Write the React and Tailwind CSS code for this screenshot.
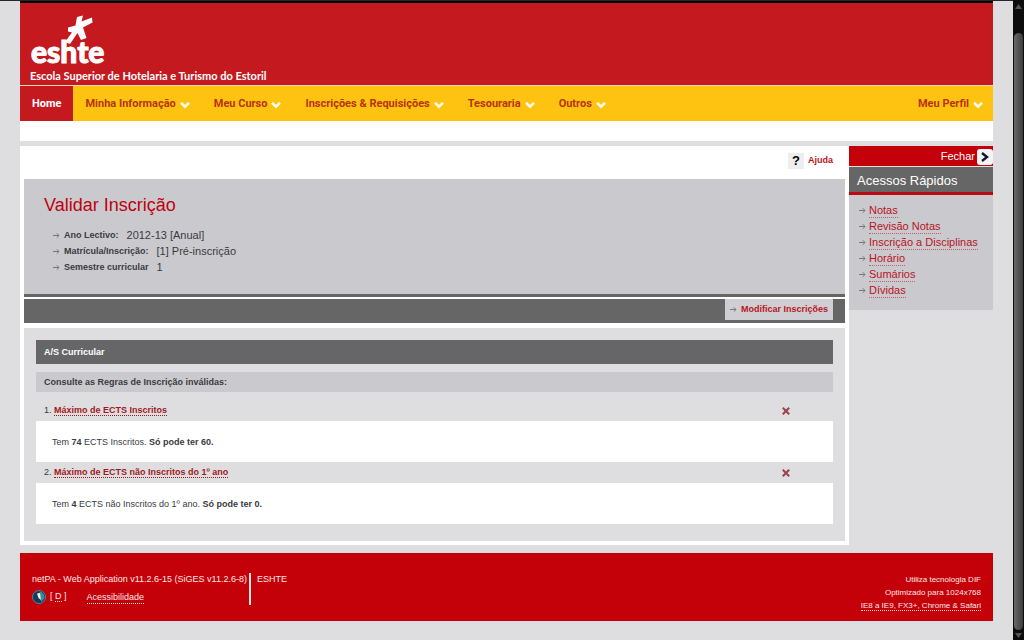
const menu = ["Minha Informação", "Meu Curso", "Inscrições & Requisições", "Tesouraria", "Outros"];

const quickLinks = ["Notas", "Revisão Notas", "Inscrição a Disciplinas", "Horário", "Sumários", "Dívidas"];

const details = [
  { label: "Ano Lectivo:", value: "2012-13 [Anual]" },
  { label: "Matrícula/Inscrição:", value: "[1] Pré-inscrição" },
  { label: "Semestre curricular", value: "1" },
];

const rules = [
  { title: "Máximo de ECTS Inscritos", count: 74, text: "ECTS Inscritos.", limit: "Só pode ter 60." },
  { title: "Máximo de ECTS não Inscritos do 1º ano", count: 4, text: "ECTS não Inscritos do 1º ano.", limit: "Só pode ter 0." },
];

function Arrow() {
  return (
    <svg viewBox="0 0 7 7" className="w-[7px] h-[7px] shrink-0" fill="none" stroke="#77777b">
      <path d="M0 3.5H6M3.8 1.3L6 3.5L3.8 5.7" />
    </svg>
  );
}

function Chevron() {
  return (
    <svg viewBox="0 0 10 8" className="w-[10px] h-2" fill="none" stroke="#fffbe6" strokeWidth="2.6">
      <path d="M1 1.8L5 5.6L9 1.8" />
    </svg>
  );
}

function Cross() {
  return (
    <svg viewBox="0 0 8 8" className="w-2 h-2" fill="none" stroke="#9c4145" strokeWidth="2">
      <path d="M0.8 0.8L7.2 7.2M7.2 0.8L0.8 7.2" />
    </svg>
  );
}

function Header() {
  return (
    <header>
      <div className="h-[84px] border-t-2 border-black bg-[#c4191f] text-white flex flex-col">
        {/* Logo */}
        <div className="relative h-[65px] ml-[11px] pt-[30px]">
          <svg viewBox="0 0 30 30" className="absolute left-[34px] top-3 w-[30px] h-[30px]" fill="#fff">
            <path d="M12 2L18 0.5L16.5 6.5L27 2.5L27.5 7.5L18 12.5L21.5 23L16 25L12.5 18L5 29L0 27L7 17.5L3 16.5L3 12.5L10.5 10.5Z" />
          </svg>
          <p className="font-['Lato'] font-black text-[30px] leading-[36px] [-webkit-text-stroke:1px_white]">eshte</p>
        </div>
        <p className="ml-[10px] font-['Lato'] font-bold text-[11px] leading-4">
          Escola Superior de Hotelaria e Turismo do Estoril
        </p>
      </div>
      <nav className="flex h-[36px] border-t border-[#f3d9b0] bg-[#fec310] font-['Roboto'] text-[11px] font-bold text-[#b8330c]">
        <a href="#" className="flex items-center px-3 pt-[2px] bg-[#c4191f] text-white">
          Home
        </a>
        {menu.map((item) => (
          <a key={item} href="#" className="flex items-center gap-1 px-3 pt-[2px]">
            {item}
            <Chevron />
          </a>
        ))}
        <a href="#" className="flex items-center gap-1 ml-auto pr-[10px] pt-[2px]">
          Meu Perfil
          <Chevron />
        </a>
      </nav>
      <div className="h-5 bg-white" />
    </header>
  );
}

function Sidebar() {
  return (
    <aside className="w-36 shrink-0">
      <button className="flex w-full h-5 pt-px items-center justify-end gap-[2px] bg-[#c40009] text-white text-[11px]">
        Fechar
        <svg viewBox="0 0 16 16" className="w-4 h-4">
          <rect width="16" height="16" rx="3" fill="#f4f4f6" />
          <path d="M5 4L10 8L5 12" fill="none" stroke="#111827" strokeWidth="2.4" />
        </svg>
      </button>
      <h2 className="mt-px h-[28px] pl-2 border-b-3 border-[#b80a12] bg-[#666] text-white text-[13px] leading-[27px]">
        Acessos Rápidos
      </h2>
      <ul className="bg-[#cacace] pt-2 pb-3 pl-[10px] text-[11px]">
        {quickLinks.map((link) => (
          <li key={link} className="flex items-center gap-[3px] h-[15px] mb-px last:mb-0">
            <Arrow />
            <a href="#" className="leading-[13px] border-b border-dotted border-[#c4606a] text-[#b8141e]">
              {link}
            </a>
          </li>
        ))}
      </ul>
    </aside>
  );
}

function Rule({ rule, number }) {
  return (
    <li>
      <div className="flex items-center justify-between h-[21px] pl-2 pr-[43px]">
        <p>
          {number}.{" "}
          <a href="#" className="font-bold text-[#a01820] border-b border-dotted border-[#a01820]">
            {rule.title}
          </a>
        </p>
        <Cross />
      </div>
      <p className="bg-white h-[41px] pl-4 leading-[43px]">
        Tem <b>{rule.count}</b> {rule.text} <b>{rule.limit}</b>
      </p>
    </li>
  );
}

function Content() {
  return (
    <main className="flex-1 bg-white p-1 pt-0">
      <div className="flex h-[33px] items-center justify-end pr-3 pb-[3px]">
        <a href="#" className="flex items-center gap-1 text-[9px] font-bold text-[#b8141e]">
          <span className="w-4 h-4 bg-[#eeeeef] text-center text-black text-[13px] leading-4">?</span>
          Ajuda
        </a>
      </div>

      <section className="h-[118px] border-b-3 border-[#666] bg-[#cacace] pl-5 pt-[14px]">
        <h1 className="text-[18px] leading-6 text-[#c00010]">Validar Inscrição</h1>
        <ul className="mt-[10px] ml-[9px]">
          {details.map((d) => (
            <li key={d.label} className="flex items-center h-4 gap-1 text-[9px]">
              <Arrow />
              <b className="leading-4">{d.label}</b>
              <span className="ml-1 text-[11px] leading-4">{d.value}</span>
            </li>
          ))}
        </ul>
      </section>

      <div className="mt-[2px] h-6 flex justify-end items-start bg-[#666] pr-3">
        <a href="#" className="flex items-center gap-1 h-[21px] px-[5px] bg-[#cfcfd3] text-[9px] font-bold text-[#b8141e]">
          <Arrow />
          Modificar Inscrições
        </a>
      </div>

      <section className="mt-[5px] bg-[#dedee1] p-3 pb-[17px] text-[9px]">
        <h2 className="h-6 pl-2 bg-[#666] text-white font-bold leading-6">A/S Curricular</h2>
        <h3 className="mt-2 mb-2 h-5 pl-2 bg-[#cacace] font-bold leading-5">
          Consulte as Regras de Inscrição inválidas:
        </h3>
        <ol>
          {rules.map((rule, i) => (
            <Rule key={rule.title} rule={rule} number={i + 1} />
          ))}
        </ol>
      </section>
    </main>
  );
}

function Footer() {
  return (
    <footer className="mt-2 flex h-[68px] justify-between bg-[#c40009] px-3 pt-5 text-[9px] text-[#ffe6e6]">
      <div className="flex">
        <div className="pr-[2px]">
          <p className="leading-3">netPA - Web Application v11.2.6-15 (SiGES v11.2.6-8)</p>
          <div className="mt-[5px] flex items-center">
            <svg viewBox="0 0 14 14" className="w-[14px] h-[14px]">
              <circle cx="7" cy="7" r="6.5" fill="#123a63" stroke="#5b7f8f" />
              <path d="M7.5 1.5A5.5 5.5 0 0 1 12 9L9 12Z" fill="#2f8fa3" />
              <path d="M5 3.5L8 3L9 10L6.5 8Z" fill="#fff3c4" />
            </svg>
            <span className="ml-1">
              [ <a href="#" className="border-b border-dotted">D</a> ]
            </span>
            <a href="#" className="ml-5 leading-3 border-b border-dotted">Acessibilidade</a>
          </div>
        </div>
        <p className="h-8 pl-[6px] border-l-2 border-[#ffe6e6] leading-3">ESHTE</p>
      </div>
      <div className="text-right text-[8px] leading-[13px]">
        <p>Utiliza tecnologia DIF</p>
        <p>Optimizado para 1024x768</p>
        <a href="#" className="border-b border-dotted">IE8 a IE9, FX3+, Chrome &amp; Safari</a>
      </div>
    </footer>
  );
}

function Scrollbar() {
  return (
    <div className="flex flex-col items-center w-[11px] shrink-0 bg-[#0c0c0c] pt-1 pb-[2px]">
      <svg viewBox="0 0 7 5" className="w-[7px] h-[5px]" fill="#555">
        <path d="M0 5L3.5 0L7 5Z" />
      </svg>
      <div className="mt-6 mb-[3px] w-[9px] flex-1 rounded-full bg-gradient-to-r from-[#6a6a6a] to-[#3c3c3c]" />
      <svg viewBox="0 0 7 5" className="w-[7px] h-[5px]" fill="#555">
        <path d="M0 0L3.5 5L7 0Z" />
      </svg>
    </div>
  );
}

export default function App() {
  return (
    <div className="flex min-h-screen bg-[#dedee1] font-['Liberation_Sans',sans-serif] text-[#3a3a3e]">
      <div className="flex-1 px-5 border-t border-[#26262a]">
        <Header />
        <div className="mt-[5px] flex items-start">
          <Content />
          <Sidebar />
        </div>
        <Footer />
      </div>
      <Scrollbar />
    </div>
  );
}
